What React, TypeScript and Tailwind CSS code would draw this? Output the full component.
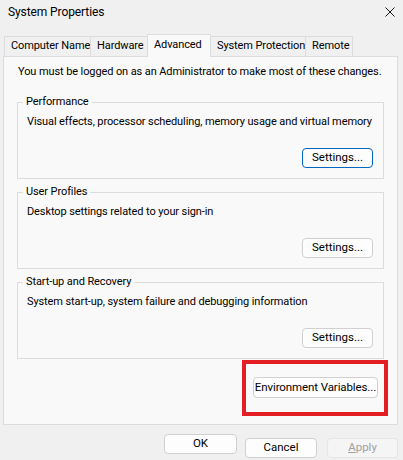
import type { ReactNode } from "react"

const font = { fontFamily: 'Roboto, "Liberation Sans", Arial, sans-serif' }

type BtnProps = { children: ReactNode; focused?: boolean; disabled?: boolean; w: string }

function Btn({ children, focused, disabled, w }: BtnProps) {
    return (
        <button
            className={`${w} h-[20px] shrink-0 whitespace-nowrap rounded-[4px] border text-[11.5px] leading-none ${
                focused
                    ? "border-[#0067c0] bg-[#fdfdfd] text-black"
                    : disabled
                      ? "border-[#e5e5e5] bg-[#f5f5f5] text-[#a0a0a0]"
                      : "border-[#d0d0d0] bg-[#fdfdfd] text-black"
            }`}
        >
            {children}
        </button>
    )
}

function Group({ title, text, focused }: { title: string; text: string; focused?: boolean }) {
    return (
        <fieldset className="mx-[13px] border border-[#dcdcdc] px-[9px] pb-[10px] pt-[4px]">
            {/* legend sits inside the padding box, pull it back */}
            <legend className="-ml-[4px] px-[3px] text-[11px] leading-[16px] tracking-[-0.1px]">{title}</legend>
            <div className="whitespace-nowrap text-[11px] leading-[16px] tracking-[-0.1px]">{text}</div>
            <div className="mt-[18px] flex justify-end pr-[1px]">
                <Btn w="w-[71px]" focused={focused}>
                    Settings...
                </Btn>
            </div>
        </fieldset>
    )
}

const tabs = ["Computer Name", "Hardware", "Advanced", "System Protection", "Remote"]
const tabW = ["w-[87px]", "w-[58px]", "w-[64px]", "w-[96px]", "w-[48px]"]

export default function App() {
    return (
        <div className="flex h-[460px] w-[403px] flex-col bg-[#f0f0f0] text-black" style={font}>
            {/* title bar */}
            <div className="flex h-[24px] shrink-0 items-center justify-between pl-[8px] pr-[8px]">
                <span className="text-[12px] tracking-[-0.1px]">System Properties</span>
                <svg width="10" height="10" viewBox="0 0 10 10">
                    <path d="M0.5 0.5 L9.5 9.5 M9.5 0.5 L0.5 9.5" stroke="#1a1a1a" strokeWidth="1" />
                </svg>
            </div>

            {/* tabs */}
            <div className="flex h-[32px] shrink-0 items-end pl-[4px]">
                {tabs.map((t, i) =>
                    t === "Advanced" ? (
                        <div
                            key={t}
                            className={`${tabW[i]} relative z-10 -mb-px -ml-px flex h-[23px] shrink-0 items-start whitespace-nowrap border border-b-0 border-[#dcdcdc] bg-[#f9f9f9] pl-[6px] pt-[2px] text-[11px] tracking-[-0.1px]`}
                        >
                            {t}
                        </div>
                    ) : (
                        <div
                            key={t}
                            className={`${tabW[i]} -ml-px flex h-[20px] shrink-0 items-center whitespace-nowrap border border-b-0 border-[#dcdcdc] bg-[#f0f0f0] pl-[6px] text-[11px] tracking-[-0.1px] first:ml-0`}
                        >
                            {t}
                        </div>
                    )
                )}
            </div>

            {/* panel */}
            <div className="ml-[3px] flex h-[369px] w-[395px] shrink-0 flex-col border border-[#dcdcdc] bg-[#f9f9f9] pt-[7px]">
                <div className="whitespace-nowrap pl-[14px] text-[11px] leading-[16px] tracking-[-0.1px]">
                    You must be logged on as an Administrator to make most of these changes.
                </div>
                <div className="mt-[14px] flex flex-col gap-[5px]">
                    <Group
                        title="Performance"
                        text="Visual effects, processor scheduling, memory usage and virtual memory"
                        focused
                    />
                    <Group title="User Profiles" text="Desktop settings related to your sign-in" />
                    <Group title="Start-up and Recovery" text="System start-up, system failure and debugging information" />
                </div>
                <div className="mr-[9px] mt-[1px] flex justify-end">
                    <div className="border-4 border-[#e31e24] pb-[14px] pl-[7px] pr-[6px] pt-[10px]">
                        <button className="h-[21px] w-[125px] whitespace-nowrap rounded-[4px] border border-[#d0d0d0] bg-[#fdfdfd] text-[11.5px] leading-none tracking-[-0.1px]">
                            Environment Variables...
                        </button>
                    </div>
                </div>
            </div>

            {/* dialog buttons */}
            <div className="mt-[9px] flex justify-end pr-[5px]">
                <Btn w="w-[73px]">OK</Btn>
                <div className="ml-[8px]">
                    <Btn w="w-[72px]">Cancel</Btn>
                </div>
                <div className="ml-[10px]">
                    <Btn w="w-[71px]" disabled>
                        <span className="underline">A</span>pply
                    </Btn>
                </div>
            </div>
        </div>
    )
}
